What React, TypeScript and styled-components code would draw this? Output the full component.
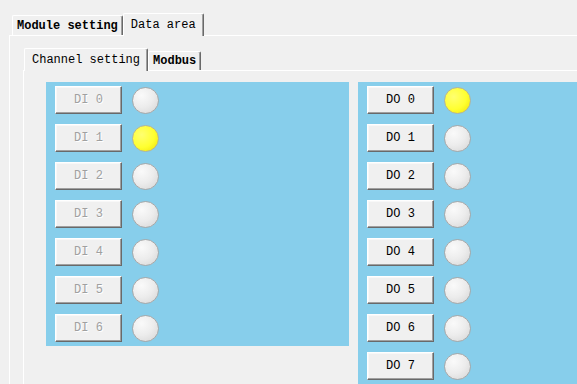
import React from "react";
import styled, { createGlobalStyle } from "styled-components";

const GlobalStyle = createGlobalStyle`
  body {
    margin: 0;
    background: #f0f0f0;
    font-family: "Liberation Mono", "DejaVu Sans Mono", monospace;
  }
`;

const Page = styled.div`
  width: 577px;
  height: 384px;
  overflow: hidden;
  box-sizing: border-box;
  padding: 13px 0 0 9px;
  background: #f0f0f0;
`;

const TabStrip = styled.div<{ inset: number; height: number }>`
  display: flex;
  align-items: flex-end;
  padding-left: ${(p) => p.inset}px;
  height: ${(p) => p.height}px;
  position: relative;
  z-index: 1;
`;

const Tab = styled.div<{ selected?: boolean; h: number }>`
  box-sizing: border-box;
  height: ${(p) => p.h}px;
  padding: ${(p) => (p.selected ? "0 7px" : "0 4px")};
  margin-bottom: ${(p) => (p.selected ? "-1px" : "0")};
  display: flex;
  align-items: center;
  background: #f0f0f0;
  border: 1px solid;
  border-color: #ffffff #696969 transparent #ffffff;
  border-bottom: none;
  border-radius: 2px 2px 0 0;
  box-shadow: inset -1px 0 0 #a0a0a0;
  font-size: 12px;
  font-weight: ${(p) => (p.selected ? "normal" : "bold")};
  color: #000;
  white-space: nowrap;
`;

const Panel = styled.div<{ pad: string }>`
  border-top: 1px solid #ffffff;
  border-left: 1px solid #ffffff;
  padding: ${(p) => p.pad};
  height: 100%;
  box-sizing: border-box;
`;

const Area = styled.div`
  display: flex;
  align-items: flex-start;
  gap: 9px;
`;

const BluePanel = styled.div<{ grow?: boolean }>`
  background: #87ceeb;
  box-sizing: border-box;
  width: ${(p) => (p.grow ? "auto" : "303px")};
  flex: ${(p) => (p.grow ? "1" : "none")};
  padding: 4px 0 ${(p) => (p.grow ? "20px" : "4px")} 9px;
  display: flex;
  flex-direction: column;
  gap: 10px;
`;

const Row = styled.div`
  display: flex;
  align-items: center;
  gap: 10px;
`;

const ChannelButton = styled.button<{ disabledLook?: boolean }>`
  box-sizing: border-box;
  width: 67px;
  height: 28px;
  padding: 0;
  margin: 0;
  background: #f0f0f0;
  border: 1px solid;
  border-color: #ffffff #696969 #696969 #ffffff;
  box-shadow: inset -1px -1px 0 #a0a0a0, inset 1px 1px 0 #f8f8f8;
  font-family: "Liberation Mono", "DejaVu Sans Mono", monospace;
  font-size: 12px;
  color: ${(p) => (p.disabledLook ? "#a0a0a0" : "#000")};
  text-shadow: ${(p) => (p.disabledLook ? "1px 1px 0 #ffffff" : "none")};
  cursor: default;
`;

const Lamp = styled.div<{ on?: boolean }>`
  box-sizing: border-box;
  width: 27px;
  height: 27px;
  border-radius: 50%;
  border: 1px solid ${(p) => (p.on ? "#b4b498" : "#a8a8a8")};
  background: ${(p) =>
    p.on
      ? "radial-gradient(circle at 35% 35%, #ffff70 0%, #ffff30 55%, #eee000 100%)"
      : "radial-gradient(circle at 35% 30%, #fafafa 0%, #ececec 50%, #d4d4d4 100%)"};
`;

const diLit = [false, true, false, false, false, false, false];
const doLit = [true, false, false, false, false, false, false, false];

export default function App() {
  return (
    <>
      <GlobalStyle />
      <Page>
        <TabStrip inset={3} height={22}>
          <Tab h={20}>Module setting</Tab>
          <Tab h={23} selected>
            Data area
          </Tab>
        </TabStrip>
        <Panel pad="12px 0 0 13px">
          <TabStrip inset={1} height={22}>
            <Tab h={23} selected>
              Channel setting
            </Tab>
            <Tab h={19}>Modbus</Tab>
          </TabStrip>
          <Panel pad="11px 0 0 22px">
            <Area>
              <BluePanel>
                {diLit.map((on, i) => (
                  <Row key={i}>
                    <ChannelButton disabledLook>DI {i}</ChannelButton>
                    <Lamp on={on} />
                  </Row>
                ))}
              </BluePanel>
              <BluePanel grow>
                {doLit.map((on, i) => (
                  <Row key={i}>
                    <ChannelButton>DO {i}</ChannelButton>
                    <Lamp on={on} />
                  </Row>
                ))}
              </BluePanel>
            </Area>
          </Panel>
        </Panel>
      </Page>
    </>
  );
}
